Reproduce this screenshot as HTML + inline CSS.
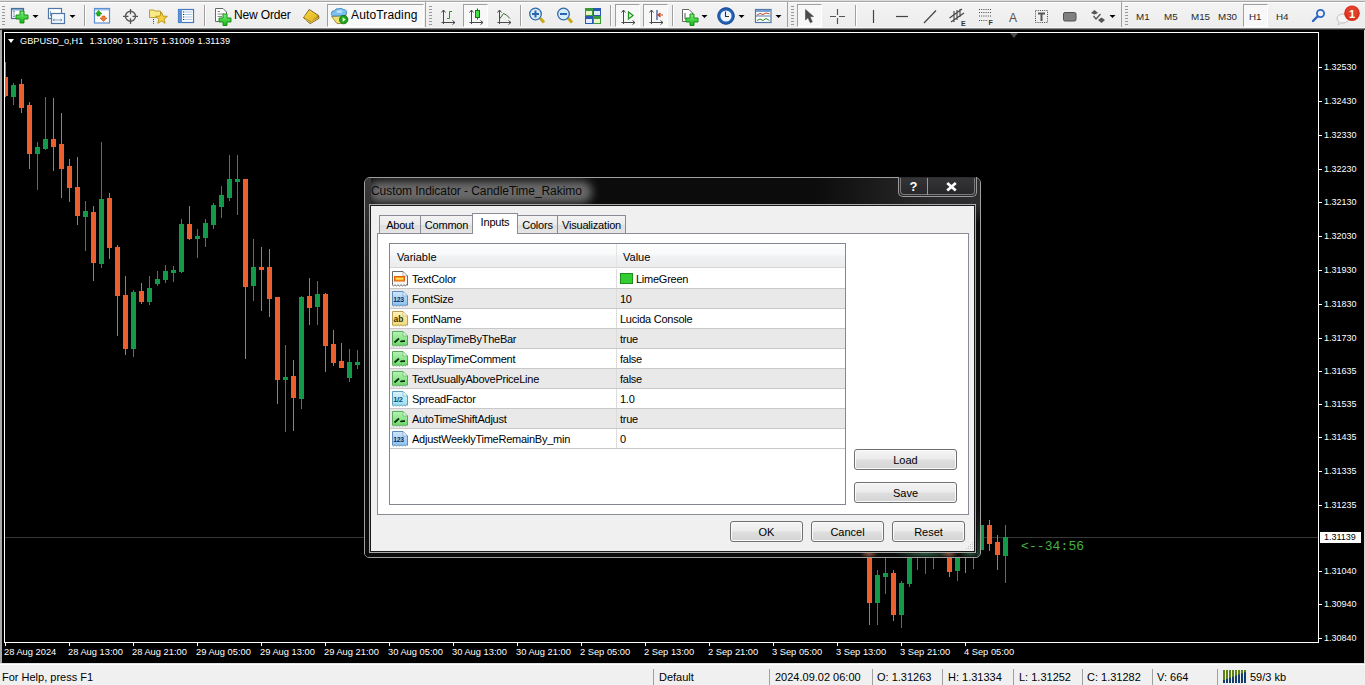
<!DOCTYPE html>
<html><head><meta charset="utf-8">
<style>
*{box-sizing:border-box;margin:0;padding:0}
html,body{width:1365px;height:685px;overflow:hidden;background:#f0f0f0;font-family:"Liberation Sans",sans-serif;position:relative}
.abs{position:absolute}
#tb{position:absolute;left:0;top:0;width:1365px;height:29px;background:linear-gradient(#f4f4f4,#ececec)}
#tb .l0{position:absolute;left:0;top:0;width:1365px;height:1px;background:#dcdcdc}
#tb .l1{position:absolute;left:0;top:1px;width:1365px;height:1px;background:#a8a8a8}
#tb .l2{position:absolute;left:0;top:2px;width:1365px;height:1px;background:#fff}
#tb .l3{position:absolute;left:0;top:28px;width:1365px;height:1px;background:#8c8c8c}
.sep{position:absolute;top:5px;width:1px;height:21px;background:#a0a0a0;box-shadow:1px 0 0 #fff}
.grip{position:absolute;top:6px;width:3px;height:20px;background:repeating-linear-gradient(#9a9a9a 0 1px,transparent 1px 3px)}
.pbtn{position:absolute;top:4px;height:23px;border:1px solid #a0a0a0;border-right-color:#fff;border-bottom-color:#fff;background:#f8f8f8}
.dd{position:absolute;top:15px;width:0;height:0;border-left:3px solid transparent;border-right:3px solid transparent;border-top:3px solid #000}
.tbt{position:absolute;font-size:12px;color:#000;top:8px;white-space:nowrap}
.tf{position:absolute;font-size:9.8px;color:#2a2a2a;top:11px;white-space:nowrap}
svg{position:absolute;overflow:visible}
#chart{position:absolute;left:0;top:29px;width:1365px;height:634px;background:#000;overflow:hidden}
#chart i{position:absolute;display:block}
#stripL{position:absolute;left:0;top:28px;width:2px;height:635px;background:#a8a8a8}
#stripR{position:absolute;left:1364px;top:29px;width:1px;height:634px;background:#d4d4d4}
.frame{position:absolute;left:4px;top:32px;width:1315px;height:611px;border:1px solid #fff}
.pt{position:absolute;left:1319px;width:3px;height:1px;background:#fff}
.pl{position:absolute;left:1324px;font-size:9px;color:#fff;white-space:nowrap;line-height:12px}
.tt{position:absolute;top:643px;width:1px;height:3px;background:#fff}
.tl{position:absolute;top:646px;font-size:9.3px;color:#fff;white-space:nowrap;line-height:12px}
#sb{position:absolute;left:0;top:663px;width:1365px;height:22px;background:#f0f0f0;border-top:1px solid #e2e2e2;box-shadow:inset 0 1px 0 #fff}
.ss{position:absolute;top:5px;width:1px;height:17px;background:#a0a0a0}
.st{position:absolute;top:6px;font-size:11px;color:#000;white-space:nowrap;line-height:14px}
/* dialog */
#dlg{position:absolute;left:364px;top:177px;width:617px;height:381px;border:1px solid #9c9c9c;border-radius:6px 6px 5px 5px;background:linear-gradient(90deg,#3c3c3c 0,#2a2a2a 40%,#101010 60%,#0c0c0c 100%)}
#dlg .glow{position:absolute;left:0;top:0;width:560px;height:28px;background:radial-gradient(ellipse 260px 16px at 120px 14px,rgba(120,120,120,.8),rgba(60,60,60,.3) 70%,rgba(0,0,0,0) 100%)}
#dlg .title{position:absolute;left:6px;top:6px;font-size:12px;color:#141414;white-space:nowrap;text-shadow:0 0 6px #8a8a8a,0 0 3px #9a9a9a}
#client{position:absolute;left:4px;top:26px;width:607px;height:349px;border:1px solid #b4b4b4;background:#f0f0f0}
#client .in{position:absolute;left:0;top:0;right:0;bottom:0;border:1px solid #1c1c1c;border-right:0;border-bottom:0}
.tab{position:absolute;top:215px;height:19px;border:1px solid #898c95;border-bottom:0;background:linear-gradient(#f3f3f3,#ebebeb 50%,#dedede 51%,#e6e6e6);font-size:11px;color:#000;padding-top:3px;text-align:center;white-space:nowrap;letter-spacing:-0.2px}
.tab.sel{top:213px;height:21px;background:#fff;z-index:2;padding-top:2px}
#panel{position:absolute;left:7px;top:55px;width:592px;height:283px;border:1px solid #898c95;background:#fff}
#list{position:absolute;left:11px;top:9px;width:458px;height:263px;border:1px solid #828790;background:#fff;overflow:hidden}
.hdr{position:absolute;left:0;top:0;width:456px;height:24px;background:linear-gradient(#fff,#f5f6f7 50%,#f0f1f2);border-bottom:1px solid #e0e0e0}
.hsep{position:absolute;left:226px;top:0;width:1px;height:24px;background:#e5e5e5}
.ht{position:absolute;top:6px;font-size:11.5px;color:#000;line-height:14px}
.row{position:absolute;left:0;width:456px;height:20px;border-bottom:1px solid #d6d6d6}
.row.g{background:#ebebeb}
.row .v{position:absolute;left:22px;top:3px;font-size:11.5px;color:#000;white-space:nowrap;line-height:14px;letter-spacing:-0.2px}
.row .c{position:absolute;left:229px;top:3px;font-size:11.5px;color:#000;white-space:nowrap;line-height:14px}
.row .cs{position:absolute;left:226px;top:0;width:1px;height:20px;background:#d6d6d6}
.row svg{left:2px;top:2px}
.btn{position:absolute;height:21px;border:1px solid #707070;border-radius:3px;background:linear-gradient(#f4f4f4 0,#ececec 45%,#dedede 55%,#d4d4d4 100%);font-size:11px;color:#000;text-align:center;line-height:20px;box-shadow:inset 0 0 0 1px #fbfbfb}
.tbtn{position:absolute;top:-1px;height:19px;border:1px solid #7a7a7a;border-top:0;background:linear-gradient(#1e1e1e,#0a0a0a);color:#fff;font-weight:bold;text-align:center;font-size:13px;line-height:17px}
.rt{position:absolute;font-size:11px;color:#000;white-space:nowrap;line-height:14px;letter-spacing:-0.25px}
.ht{position:absolute;font-size:11px;color:#000;white-space:nowrap;line-height:14px}
</style></head><body>
<div id="tb"><div class="l0"></div><div class="l1"></div><div class="l2"></div><div class="l3"></div>
<div class="grip" style="left:2px"></div>
<div class="sep" style="left:84px"></div>
<div class="sep" style="left:204px"></div>
<div class="pbtn" style="left:327px;width:97px"></div>
<div class="abs" style="left:425px;top:2px;width:1px;height:26px;background:#a0a0a0"></div>
<div class="grip" style="left:429px"></div>
<div class="pbtn" style="left:463px;width:25px"></div>
<div class="sep" style="left:520px"></div>
<div class="sep" style="left:610px"></div>
<div class="pbtn" style="left:615px;width:25px"></div>
<div class="pbtn" style="left:643px;width:25px"></div>
<div class="sep" style="left:672px"></div>
<div class="abs" style="left:787px;top:2px;width:1px;height:26px;background:#a0a0a0"></div>
<div class="grip" style="left:791px"></div>
<div class="pbtn" style="left:797px;width:25px"></div>
<div class="sep" style="left:855px"></div>
<div class="abs" style="left:1121px;top:2px;width:1px;height:26px;background:#a0a0a0"></div>
<div class="grip" style="left:1125px"></div>
<div class="pbtn" style="left:1243px;width:25px"></div>
<div class="tbt" style="left:234px;top:8px;letter-spacing:-0.15px">New Order</div>
<div class="tbt" style="left:351px;top:8px;letter-spacing:0.15px">AutoTrading</div>
<div class="tf" style="left:1136px">M1</div>
<div class="tf" style="left:1164px">M5</div>
<div class="tf" style="left:1191px">M15</div>
<div class="tf" style="left:1218px">M30</div>
<div class="tf" style="left:1249px">H1</div>
<div class="tf" style="left:1276px">H4</div>
<svg width="1365" height="28" style="left:0;top:0" viewBox="0 0 1365 28">
<defs>
<linearGradient id="gplus" x1="0" y1="0" x2="0" y2="1"><stop offset="0" stop-color="#7cf27c"/><stop offset="1" stop-color="#18b418"/></linearGradient>
<linearGradient id="gold" x1="0" y1="0" x2="1" y2="1"><stop offset="0" stop-color="#fff0a0"/><stop offset="1" stop-color="#c89a10"/></linearGradient><linearGradient id="gold2" x1="0" y1="0" x2="1" y2="1"><stop offset="0" stop-color="#f8d840"/><stop offset="1" stop-color="#e0b020"/></linearGradient>
</defs>
<!-- new chart -->
<rect x="11.5" y="8.5" width="12" height="10" fill="#fff" stroke="#4a6f96" stroke-width="1.2"/>
<rect x="12" y="9" width="11" height="1.5" fill="#7aa4d4"/>
<path d="M14,11 V17 M13,12 L14,11 L15,12 M13,16 L14,17 L15,16" stroke="#7a90a8" stroke-width="0.8" fill="none"/>
<path d="M20,11 H24 V15 H28 V19 H24 V23 H20 V19 H16 V15 H20 Z" fill="url(#gplus)" stroke="#0c8a0c" stroke-width="0.9"/>
<path d="M32.5,15 H38.5 L35.5,18 Z" fill="#000"/>
<!-- profiles -->
<rect x="48.5" y="8.5" width="13" height="10" fill="#fff" stroke="#4f78a8" stroke-width="1.2"/>
<path d="M50.5,11 V16 M50.5,15 H58 M56.5,14 L58,15 L56.5,16" stroke="#6a88b0" stroke-width="0.8" fill="none"/>
<rect x="51.5" y="13.5" width="13" height="10" fill="#f4f9ff" stroke="#4f78a8" stroke-width="1.2"/>
<path d="M53,20 H62 M54.5,19 L53,20 L54.5,21 M60.5,19 L62,20 L60.5,21" stroke="#6a88b0" stroke-width="0.8" fill="none"/>
<path d="M69.5,15 H75.5 L72.5,18 Z" fill="#000"/>
<!-- market watch -->
<rect x="94.5" y="8.5" width="15" height="14.5" fill="#fff" stroke="#5e8fd0" stroke-width="1.2"/>
<rect x="95" y="9" width="14" height="1.5" fill="#9cc0ec"/>
<path d="M98.5,10.5 L102,14 H100 V16 H97 V14 H95.5 Z" fill="#20b020" stroke="#138a13" stroke-width="0.6"/>
<path d="M103.5,21.5 L107,18 H105 V16 H102 V18 H100 Z" fill="#f07a30" stroke="#c85a18" stroke-width="0.6"/>
<!-- crosshair -->
<circle cx="130.5" cy="16.3" r="5" fill="none" stroke="#555" stroke-width="1.4"/>
<path d="M123,16.3 H128.5 M132.5,16.3 H138 M130.5,9 V14.3 M130.5,18.3 V24" stroke="#555" stroke-width="1.3"/>
<!-- folder star -->
<path d="M149.5,10 H154 L155,11 H160.5 V17.5 H149.5 Z" fill="#f8ea88" stroke="#b8a030" stroke-width="1"/>
<path d="M161.50,12.10 L163.09,16.12 L167.40,16.38 L164.07,19.13 L165.14,23.32 L161.50,21.00 L157.86,23.32 L158.93,19.13 L155.60,16.38 L159.91,16.12 Z" fill="#f2d040" stroke="#b89410" stroke-width="0.9"/>
<path d="M153.5,19 V24" stroke="#333" stroke-width="1" stroke-dasharray="1 1.2"/>
<!-- navigator -->
<rect x="178.5" y="9.5" width="15" height="13" fill="#fff" stroke="#4878c0" stroke-width="1.2"/>
<rect x="178.5" y="9.5" width="3.5" height="13" fill="#5a92d8"/>
<path d="M184,12 H192 M184,14.5 H192 M184,17 H192 M184,19.5 H192" stroke="#9bb8dc" stroke-width="0.8"/>
<path d="M183,12 h1 M183,14.5 h1 M183,17 h1 M183,19.5 h1" stroke="#222" stroke-width="1"/>
<!-- new order -->
<path d="M215.5,8.5 H223 L226.5,12 V21.5 H215.5 Z" fill="#fff" stroke="#666" stroke-width="1"/>
<path d="M217.5,11.5 H220 M217.5,14 H224 M217.5,16.5 H222" stroke="#888" stroke-width="1"/>
<path d="M223,14 H227 V18 H231 V22 H227 V25.5 H223 V22 H219 V18 H223 Z" fill="url(#gplus)" stroke="#0c8a0c" stroke-width="0.9"/>
<!-- gold book -->
<path d="M303.5,17.8 L309.2,9.5 L318.5,15.5 L319,18.3 L310.2,23.6 Z" fill="#b89020" stroke="#6a5010" stroke-width="0.9"/>
<path d="M304,17.3 L309.4,10 L317.8,15.6 L311.5,21.5 Z" fill="url(#gold2)"/>
<path d="M305,19 L310.5,22.6 L318.5,17.8" stroke="#e8c850" stroke-width="0.9" fill="none"/>
<!-- autotrading icon -->
<path d="M331.5,16.5 L346,15.5 L346,20 L341,23.5 L337,23.5 Z" fill="#f0e070" stroke="#8a7a20" stroke-width="0.8"/>
<path d="M331.5,13.5 Q331,10.5 334.5,10.8 Q335.5,8 339,8.8 Q341.5,7.5 343.5,9.5 Q347.5,10 346.5,13 Q347,15.5 343,15.8 L334,16 Q330.5,15.8 331.5,13.5 Z" fill="#7cc0ec" stroke="#3a80b8" stroke-width="0.8"/>
<ellipse cx="339.5" cy="11.5" rx="3" ry="1.6" fill="#b8e0fa"/>
<circle cx="343.7" cy="19.6" r="4.2" fill="#18a818" stroke="#0a6a0a" stroke-width="0.8"/>
<path d="M342.6,17.3 L345.8,19.6 L342.6,21.9 Z" fill="#e8ffe8"/>
<!-- bar chart -->
<path d="M443.5,10 V24 M441.5,22.5 H455" stroke="#4a4a4a" stroke-width="1" fill="none"/><path d="M441.5,12.5 L443.5,10 L445.5,12.5 M452.5,20.5 L455,22.5 L452.5,24.5" stroke="#4a4a4a" stroke-width="1" fill="none"/>
<path d="M447,18.5 H449.5 V11.5 H452" stroke="#1a9a1a" stroke-width="1" fill="none"/>
<!-- candle chart -->
<path d="M471.5,10 V24 M469.5,22.5 H483" stroke="#4a4a4a" stroke-width="1" fill="none"/><path d="M469.5,12.5 L471.5,10 L473.5,12.5 M480.5,20.5 L483,22.5 L480.5,24.5" stroke="#4a4a4a" stroke-width="1" fill="none"/>
<path d="M477.5,8.5 V19.5" stroke="#107a10" stroke-width="1"/>
<rect x="475.5" y="10.5" width="4" height="7" fill="#46e046" stroke="#107a10" stroke-width="1"/>
<!-- line chart -->
<path d="M499.5,10 V24 M497.5,22.5 H511" stroke="#4a4a4a" stroke-width="1" fill="none"/><path d="M497.5,12.5 L499.5,10 L501.5,12.5 M508.5,20.5 L511,22.5 L508.5,24.5" stroke="#4a4a4a" stroke-width="1" fill="none"/>
<path d="M499.5,19 L503.5,13.5 L506.5,15 L510,18.5" stroke="#3a6a3a" stroke-width="1" fill="none"/>
<!-- zoom in / out -->
<path d="M540,18 L544,22.5" stroke="#c8a818" stroke-width="3"/>
<circle cx="535.5" cy="14" r="5.8" fill="#d4ecfc" stroke="#3068a8" stroke-width="1.3"/>
<path d="M532,14 H539 M535.5,10.5 V17.5" stroke="#2a64b0" stroke-width="2"/>
<path d="M568,18 L572,22.5" stroke="#c8a818" stroke-width="3"/>
<circle cx="563.5" cy="14" r="5.8" fill="#d4ecfc" stroke="#3068a8" stroke-width="1.3"/>
<path d="M560,14 H567" stroke="#2a64b0" stroke-width="2"/>
<!-- tile -->
<rect x="585" y="8" width="8" height="8" fill="#3a9a3a"/><rect x="586" y="11" width="6" height="4" fill="#e8f4c8"/>
<rect x="593" y="8" width="8" height="8" fill="#2a58b8"/><rect x="594" y="11" width="6" height="4" fill="#e4ecfa"/>
<rect x="585" y="16" width="8" height="8" fill="#2a58b8"/><rect x="586" y="19" width="6" height="4" fill="#e4ecfa"/>
<rect x="593" y="16" width="8" height="8" fill="#3a9a3a"/><rect x="594" y="19" width="6" height="4" fill="#e8f4c8"/>
<!-- auto scroll -->
<path d="M623.5,10 V24 M621.5,22.5 H635" stroke="#4a4a4a" stroke-width="1" fill="none"/><path d="M621.5,12.5 L623.5,10 L625.5,12.5 M632.5,20.5 L635,22.5 L632.5,24.5" stroke="#4a4a4a" stroke-width="1" fill="none"/>
<path d="M628.5,12 L633,15.5 L628.5,19 Z" fill="none" stroke="#1a9a1a" stroke-width="1.3"/>
<!-- chart shift -->
<path d="M651.5,10 V24 M649.5,22.5 H663" stroke="#4a4a4a" stroke-width="1" fill="none"/><path d="M649.5,12.5 L651.5,10 L653.5,12.5 M660.5,20.5 L663,22.5 L660.5,24.5" stroke="#4a4a4a" stroke-width="1" fill="none"/>
<path d="M657,10 V20" stroke="#2a4a8a" stroke-width="1.2"/>
<path d="M663,15 H658.5 M660.5,13 L658,15 L660.5,17" stroke="#c04020" stroke-width="1.2" fill="none"/>
<!-- indicators -->
<path d="M682.5,9.5 H689 L692.5,13 V21.5 H682.5 Z" fill="#fff" stroke="#666" stroke-width="1"/>
<path d="M685,13 V19 H688" stroke="#555" stroke-width="1" fill="none"/>
<path d="M690,14 H694 V18 H698 V22 H694 V25.5 H690 V22 H686 V18 H690 Z" fill="url(#gplus)" stroke="#0c8a0c" stroke-width="0.9"/>
<path d="M701.5,15 H707.5 L704.5,18 Z" fill="#000"/>
<!-- clock -->
<circle cx="726" cy="16" r="7" fill="#eef6ff" stroke="#1f5fb8" stroke-width="2.8"/><circle cx="726" cy="16" r="8.3" fill="none" stroke="#14408a" stroke-width="0.8"/>
<path d="M725.5,11.5 V16.5 H729" stroke="#333" stroke-width="1.1" fill="none"/>
<path d="M738.5,15 H744.5 L741.5,18 Z" fill="#000"/>
<!-- templates -->
<rect x="755.5" y="9.5" width="15.5" height="13" fill="#fff" stroke="#5078a8" stroke-width="1.2"/>
<rect x="756" y="10" width="14.5" height="2" fill="#7aa0d0"/>
<path d="M756,16 H770.5" stroke="#5078a8" stroke-width="1"/>
<path d="M757,15 L760,13.5 L763,14.5 L766,13 L769.5,13.8" stroke="#c04a20" stroke-width="1" fill="none"/>
<path d="M757,20.5 L760,19 L763,20.5 L766,18.5 L769.5,20.5" stroke="#2a8a2a" stroke-width="1" fill="none"/>
<path d="M775.5,15 H781.5 L778.5,18 Z" fill="#000"/>
<!-- cursor -->
<path d="M805.5,9.5 L813.5,16.5 L810,16.8 L812.3,21.8 L810.3,22.8 L808,17.7 L805.5,20 Z" fill="#4a4a4a" stroke="#4a4a4a" stroke-width="0.6"/>
<!-- crosshair 2 -->
<path d="M830,16.5 H845 M837.5,9 V24" stroke="#555" stroke-width="1.2"/>
<rect x="836" y="15" width="3" height="3" fill="#f0f0f0"/>
<!-- lines -->
<path d="M873.5,10 V23" stroke="#444" stroke-width="1.2"/>
<path d="M896,16.5 H908" stroke="#444" stroke-width="1.2"/>
<path d="M924,23 L936,10.5" stroke="#444" stroke-width="1.2"/>
<!-- channel E -->
<path d="M949.5,18 L962,9 M951,22 L964,13 M954,11 V22 M957,10 V20 M960,9 V17" stroke="#444" stroke-width="1.1" fill="none"/>
<text x="961" y="25.5" font-family="Liberation Sans" font-weight="bold" font-size="7" fill="#333">E</text>
<!-- fibo F -->
<path d="M979,9.5 H992 M979,12.5 H992 M979,16 H992 M979,20.5 H988" stroke="#444" stroke-width="1" stroke-dasharray="1 1.2"/>
<text x="988.5" y="25" font-family="Liberation Sans" font-weight="bold" font-size="7" fill="#333">F</text>
<!-- A -->
<text x="1009" y="21.5" font-family="Liberation Sans" font-size="12" fill="#505050">A</text>
<!-- T label -->
<rect x="1035.5" y="10.5" width="12" height="12" fill="none" stroke="#444" stroke-width="1" stroke-dasharray="1 1.2"/>
<path d="M1038,13.5 H1045 M1041.5,13.5 V21" stroke="#555" stroke-width="2"/>
<!-- rectangle -->
<rect x="1063.5" y="12.5" width="12.5" height="8.5" rx="1.5" fill="#808080" stroke="#505050" stroke-width="1"/>
<!-- arrows -->
<path d="M1091,13 L1094.5,10 L1098,13 L1094.5,14.5 Z" fill="#555"/>
<path d="M1093.5,16 L1096,19 L1100.5,14" stroke="#555" stroke-width="1.3" fill="none"/>
<path d="M1098,20 L1101.5,17.5 L1105,20 L1101.5,23 Z" fill="#555"/>
<path d="M1109.5,15 H1115.5 L1112.5,18 Z" fill="#000"/>
<!-- search -->
<circle cx="1320.5" cy="13.5" r="3.6" fill="none" stroke="#2a64c8" stroke-width="1.8"/>
<path d="M1317.5,16.5 L1313,21" stroke="#2a64c8" stroke-width="2.4" stroke-linecap="round"/>
<!-- chat -->
<ellipse cx="1343" cy="18.5" rx="6" ry="4.5" fill="#f4f4f4" stroke="#c0c0c0" stroke-width="1"/>
<path d="M1339,22 L1338,25 L1342,22.5" fill="#f4f4f4" stroke="#c0c0c0" stroke-width="0.8"/>
<circle cx="1352" cy="13.2" r="7.8" fill="#d8301c"/>
<circle cx="1352" cy="12" r="6" fill="#e84a30" opacity=".6"/>
<text x="1352" y="17.5" text-anchor="middle" font-family="Liberation Sans" font-weight="bold" font-size="11" fill="#fff">1</text>
</svg>

</div>
<div id="chart"><div style="position:absolute;left:5px;top:4px;width:1313px;height:609px;overflow:hidden"><div style="position:absolute;left:-5px;top:-33px;width:1365px;height:685px">
<i style="left:5px;top:537px;width:1314px;height:1px;background:#363636"></i>
<i style="left:5px;top:62px;height:35px;width:1px;background:#ec6030"></i>
<i style="left:3px;top:77px;height:19px;width:5px;background:#ec6030"></i>
<i style="left:13px;top:83px;height:22px;width:1px;background:#13994a"></i>
<i style="left:11px;top:85px;height:12px;width:5px;background:#13994a"></i>
<i style="left:21px;top:79px;height:34px;width:1px;background:#ec6030"></i>
<i style="left:19px;top:84px;height:24px;width:5px;background:#ec6030"></i>
<i style="left:29px;top:102px;height:67px;width:1px;background:#ec6030"></i>
<i style="left:27px;top:105px;height:49px;width:5px;background:#ec6030"></i>
<i style="left:37px;top:142px;height:48px;width:1px;background:#13994a"></i>
<i style="left:35px;top:147px;height:7px;width:5px;background:#13994a"></i>
<i style="left:45px;top:97px;height:53px;width:1px;background:#13994a"></i>
<i style="left:43px;top:139px;height:10px;width:5px;background:#13994a"></i>
<i style="left:53px;top:98px;height:73px;width:1px;background:#ec6030"></i>
<i style="left:51px;top:139px;height:8px;width:5px;background:#ec6030"></i>
<i style="left:61px;top:113px;height:85px;width:1px;background:#ec6030"></i>
<i style="left:59px;top:144px;height:25px;width:5px;background:#ec6030"></i>
<i style="left:69px;top:159px;height:43px;width:1px;background:#ec6030"></i>
<i style="left:67px;top:166px;height:22px;width:5px;background:#ec6030"></i>
<i style="left:77px;top:157px;height:68px;width:1px;background:#ec6030"></i>
<i style="left:75px;top:187px;height:29px;width:5px;background:#ec6030"></i>
<i style="left:85px;top:201px;height:50px;width:1px;background:#13994a"></i>
<i style="left:83px;top:211px;height:6px;width:5px;background:#13994a"></i>
<i style="left:93px;top:206px;height:75px;width:1px;background:#ec6030"></i>
<i style="left:91px;top:212px;height:51px;width:5px;background:#ec6030"></i>
<i style="left:101px;top:142px;height:126px;width:1px;background:#13994a"></i>
<i style="left:99px;top:199px;height:65px;width:5px;background:#13994a"></i>
<i style="left:109px;top:193px;height:66px;width:1px;background:#ec6030"></i>
<i style="left:107px;top:198px;height:50px;width:5px;background:#ec6030"></i>
<i style="left:117px;top:245px;height:91px;width:1px;background:#ec6030"></i>
<i style="left:115px;top:247px;height:49px;width:5px;background:#ec6030"></i>
<i style="left:125px;top:276px;height:79px;width:1px;background:#ec6030"></i>
<i style="left:123px;top:295px;height:54px;width:5px;background:#ec6030"></i>
<i style="left:133px;top:290px;height:67px;width:1px;background:#13994a"></i>
<i style="left:131px;top:292px;height:57px;width:5px;background:#13994a"></i>
<i style="left:141px;top:283px;height:21px;width:1px;background:#ec6030"></i>
<i style="left:139px;top:291px;height:11px;width:5px;background:#ec6030"></i>
<i style="left:149px;top:276px;height:29px;width:1px;background:#13994a"></i>
<i style="left:147px;top:288px;height:14px;width:5px;background:#13994a"></i>
<i style="left:157px;top:271px;height:15px;width:1px;background:#13994a"></i>
<i style="left:155px;top:279px;height:5px;width:5px;background:#13994a"></i>
<i style="left:165px;top:265px;height:18px;width:1px;background:#13994a"></i>
<i style="left:163px;top:271px;height:9px;width:5px;background:#13994a"></i>
<i style="left:173px;top:266px;height:16px;width:1px;background:#13994a"></i>
<i style="left:171px;top:270px;height:3px;width:5px;background:#13994a"></i>
<i style="left:181px;top:219px;height:54px;width:1px;background:#13994a"></i>
<i style="left:179px;top:224px;height:48px;width:5px;background:#13994a"></i>
<i style="left:189px;top:206px;height:34px;width:1px;background:#ec6030"></i>
<i style="left:187px;top:224px;height:15px;width:5px;background:#ec6030"></i>
<i style="left:197px;top:229px;height:29px;width:1px;background:#13994a"></i>
<i style="left:195px;top:236px;height:3px;width:5px;background:#13994a"></i>
<i style="left:205px;top:219px;height:28px;width:1px;background:#13994a"></i>
<i style="left:203px;top:223px;height:15px;width:5px;background:#13994a"></i>
<i style="left:213px;top:203px;height:26px;width:1px;background:#13994a"></i>
<i style="left:211px;top:205px;height:20px;width:5px;background:#13994a"></i>
<i style="left:221px;top:186px;height:32px;width:1px;background:#13994a"></i>
<i style="left:219px;top:195px;height:12px;width:5px;background:#13994a"></i>
<i style="left:229px;top:155px;height:46px;width:1px;background:#13994a"></i>
<i style="left:227px;top:179px;height:19px;width:5px;background:#13994a"></i>
<i style="left:237px;top:155px;height:60px;width:1px;background:#13994a"></i>
<i style="left:235px;top:179px;height:3px;width:5px;background:#13994a"></i>
<i style="left:245px;top:179px;height:180px;width:1px;background:#ec6030"></i>
<i style="left:243px;top:179px;height:108px;width:5px;background:#ec6030"></i>
<i style="left:253px;top:239px;height:62px;width:1px;background:#13994a"></i>
<i style="left:251px;top:267px;height:19px;width:5px;background:#13994a"></i>
<i style="left:261px;top:247px;height:64px;width:1px;background:#ec6030"></i>
<i style="left:259px;top:267px;height:3px;width:5px;background:#ec6030"></i>
<i style="left:269px;top:249px;height:68px;width:1px;background:#ec6030"></i>
<i style="left:267px;top:267px;height:32px;width:5px;background:#ec6030"></i>
<i style="left:277px;top:297px;height:107px;width:1px;background:#ec6030"></i>
<i style="left:275px;top:297px;height:83px;width:5px;background:#ec6030"></i>
<i style="left:285px;top:345px;height:87px;width:1px;background:#13994a"></i>
<i style="left:283px;top:377px;height:3px;width:5px;background:#13994a"></i>
<i style="left:293px;top:360px;height:71px;width:1px;background:#ec6030"></i>
<i style="left:291px;top:376px;height:22px;width:5px;background:#ec6030"></i>
<i style="left:301px;top:296px;height:113px;width:1px;background:#13994a"></i>
<i style="left:299px;top:297px;height:102px;width:5px;background:#13994a"></i>
<i style="left:309px;top:278px;height:47px;width:1px;background:#ec6030"></i>
<i style="left:307px;top:296px;height:12px;width:5px;background:#ec6030"></i>
<i style="left:317px;top:281px;height:44px;width:1px;background:#13994a"></i>
<i style="left:315px;top:294px;height:13px;width:5px;background:#13994a"></i>
<i style="left:325px;top:293px;height:79px;width:1px;background:#ec6030"></i>
<i style="left:323px;top:294px;height:52px;width:5px;background:#ec6030"></i>
<i style="left:333px;top:330px;height:36px;width:1px;background:#ec6030"></i>
<i style="left:331px;top:344px;height:19px;width:5px;background:#ec6030"></i>
<i style="left:341px;top:343px;height:25px;width:1px;background:#ec6030"></i>
<i style="left:339px;top:361px;height:7px;width:5px;background:#ec6030"></i>
<i style="left:349px;top:349px;height:33px;width:1px;background:#13994a"></i>
<i style="left:347px;top:362px;height:16px;width:5px;background:#13994a"></i>
<i style="left:357px;top:350px;height:19px;width:1px;background:#13994a"></i>
<i style="left:355px;top:362px;height:3px;width:5px;background:#13994a"></i>
<i style="left:869px;top:540px;height:85px;width:1px;background:#ec6030"></i>
<i style="left:867px;top:545px;height:58px;width:5px;background:#ec6030"></i>
<i style="left:877px;top:570px;height:55px;width:1px;background:#13994a"></i>
<i style="left:875px;top:575px;height:28px;width:5px;background:#13994a"></i>
<i style="left:885px;top:540px;height:54px;width:1px;background:#13994a"></i>
<i style="left:883px;top:573px;height:4px;width:5px;background:#13994a"></i>
<i style="left:893px;top:570px;height:51px;width:1px;background:#ec6030"></i>
<i style="left:891px;top:573px;height:42px;width:5px;background:#ec6030"></i>
<i style="left:901px;top:581px;height:47px;width:1px;background:#13994a"></i>
<i style="left:899px;top:583px;height:32px;width:5px;background:#13994a"></i>
<i style="left:909px;top:540px;height:47px;width:1px;background:#13994a"></i>
<i style="left:907px;top:545px;height:39px;width:5px;background:#13994a"></i>
<i style="left:917px;top:540px;height:30px;width:1px;background:#13994a"></i>
<i style="left:915px;top:545px;height:6px;width:5px;background:#13994a"></i>
<i style="left:925px;top:540px;height:34px;width:1px;background:#13994a"></i>
<i style="left:923px;top:545px;height:6px;width:5px;background:#13994a"></i>
<i style="left:933px;top:540px;height:29px;width:1px;background:#13994a"></i>
<i style="left:931px;top:545px;height:6px;width:5px;background:#13994a"></i>
<i style="left:949px;top:540px;height:37px;width:1px;background:#ec6030"></i>
<i style="left:947px;top:545px;height:27px;width:5px;background:#ec6030"></i>
<i style="left:957px;top:540px;height:41px;width:1px;background:#13994a"></i>
<i style="left:955px;top:545px;height:26px;width:5px;background:#13994a"></i>
<i style="left:965px;top:540px;height:33px;width:1px;background:#ec6030"></i>
<i style="left:963px;top:545px;height:6px;width:5px;background:#ec6030"></i>
<i style="left:973px;top:540px;height:29px;width:1px;background:#13994a"></i>
<i style="left:971px;top:545px;height:6px;width:5px;background:#13994a"></i>
<i style="left:981px;top:525px;height:25px;width:1px;background:#13994a"></i>
<i style="left:979px;top:525px;height:25px;width:5px;background:#13994a"></i>
<i style="left:989px;top:520px;height:31px;width:1px;background:#ec6030"></i>
<i style="left:987px;top:525px;height:19px;width:5px;background:#ec6030"></i>
<i style="left:997px;top:535px;height:35px;width:1px;background:#ec6030"></i>
<i style="left:995px;top:542px;height:13px;width:5px;background:#ec6030"></i>
<i style="left:1005px;top:525px;height:58px;width:1px;background:#13994a"></i>
<i style="left:1003px;top:537px;height:19px;width:5px;background:#13994a"></i>
</div></div></div>
<div id="stripL"></div><div id="stripR"></div><div class="abs" style="left:0;top:29px;width:1365px;height:1px;background:#383838"></div><div class="abs" style="left:0;top:27px;width:1365px;height:1px;background:#f6f6f6"></div>
<div class="frame"></div>
<div class="abs" style="left:1010px;top:33px;width:0;height:0;border-left:4.5px solid transparent;border-right:4.5px solid transparent;border-top:5px solid #484848"></div>
<div class="pt" style="top:67px"></div><div class="pl" style="top:61px">1.32530</div>
<div class="pt" style="top:101px"></div><div class="pl" style="top:95px">1.32430</div>
<div class="pt" style="top:135px"></div><div class="pl" style="top:129px">1.32330</div>
<div class="pt" style="top:169px"></div><div class="pl" style="top:163px">1.32230</div>
<div class="pt" style="top:202px"></div><div class="pl" style="top:196px">1.32130</div>
<div class="pt" style="top:236px"></div><div class="pl" style="top:230px">1.32030</div>
<div class="pt" style="top:270px"></div><div class="pl" style="top:264px">1.31930</div>
<div class="pt" style="top:304px"></div><div class="pl" style="top:298px">1.31830</div>
<div class="pt" style="top:338px"></div><div class="pl" style="top:332px">1.31730</div>
<div class="pt" style="top:371px"></div><div class="pl" style="top:365px">1.31635</div>
<div class="pt" style="top:404px"></div><div class="pl" style="top:398px">1.31535</div>
<div class="pt" style="top:437px"></div><div class="pl" style="top:431px">1.31435</div>
<div class="pt" style="top:471px"></div><div class="pl" style="top:465px">1.31335</div>
<div class="pt" style="top:505px"></div><div class="pl" style="top:499px">1.31235</div>
<div class="pt" style="top:571px"></div><div class="pl" style="top:565px">1.31040</div>
<div class="pt" style="top:604px"></div><div class="pl" style="top:598px">1.30940</div>
<div class="pt" style="top:638px"></div><div class="pl" style="top:632px">1.30840</div>
<div class="abs" style="left:1320px;top:532px;width:41px;height:11px;background:#fff"></div>
<div class="pl" style="top:531px;color:#000">1.31139</div>
<div class="tt" style="left:5px"></div><div class="tl" style="left:4px">28 Aug 2024</div>
<div class="tt" style="left:69px"></div><div class="tl" style="left:68px">28 Aug 13:00</div>
<div class="tt" style="left:133px"></div><div class="tl" style="left:132px">28 Aug 21:00</div>
<div class="tt" style="left:197px"></div><div class="tl" style="left:196px">29 Aug 05:00</div>
<div class="tt" style="left:261px"></div><div class="tl" style="left:260px">29 Aug 13:00</div>
<div class="tt" style="left:325px"></div><div class="tl" style="left:324px">29 Aug 21:00</div>
<div class="tt" style="left:389px"></div><div class="tl" style="left:388px">30 Aug 05:00</div>
<div class="tt" style="left:453px"></div><div class="tl" style="left:452px">30 Aug 13:00</div>
<div class="tt" style="left:517px"></div><div class="tl" style="left:516px">30 Aug 21:00</div>
<div class="tt" style="left:581px"></div><div class="tl" style="left:580px">2 Sep 05:00</div>
<div class="tt" style="left:645px"></div><div class="tl" style="left:644px">2 Sep 13:00</div>
<div class="tt" style="left:709px"></div><div class="tl" style="left:708px">2 Sep 21:00</div>
<div class="tt" style="left:773px"></div><div class="tl" style="left:772px">3 Sep 05:00</div>
<div class="tt" style="left:837px"></div><div class="tl" style="left:836px">3 Sep 13:00</div>
<div class="tt" style="left:901px"></div><div class="tl" style="left:900px">3 Sep 21:00</div>
<div class="tt" style="left:965px"></div><div class="tl" style="left:964px">4 Sep 05:00</div>
<div class="abs" style="left:8px;top:39px;width:0;height:0;border-left:3.5px solid transparent;border-right:3.5px solid transparent;border-top:4.5px solid #fff"></div>
<div class="abs" style="left:20px;top:35px;font-size:9.2px;color:#fff;white-space:nowrap;line-height:12px;word-spacing:0.5px">GBPUSD_o,H1&nbsp; 1.31090 1.31175 1.31009 1.31139</div>
<div class="abs" style="left:1021px;top:539px;font-family:'Liberation Mono',monospace;font-size:13px;letter-spacing:0.1px;color:#44b444;white-space:nowrap;line-height:15px">&lt;--34:56</div>
<div id="dlgw" style="position:absolute;left:0;top:0">
<div class="abs" style="left:364px;top:177px;width:617px;height:381px;border:1px solid #a0a0a0;border-radius:6px 6px 5px 5px;background:#0c0c0c;overflow:hidden">
<div class="abs" style="left:3px;top:3px;width:224px;height:22px;background:#6a6a6a;border-radius:10px;filter:blur(4px)"></div>
<div class="abs" style="left:0;top:0;width:6px;height:379px;background:linear-gradient(#3a3a3a,#1a1a1a 30%,#0c0c0c 60%)"></div>
<div class="abs" style="left:450px;top:0;width:170px;height:26px;background:linear-gradient(90deg,rgba(46,46,48,0),rgba(46,46,48,.9) 70%,#2e2e30)"></div><div class="abs" style="left:606px;top:26px;width:12px;height:20px;background:linear-gradient(#2e2e30,rgba(46,46,48,0))"></div>
<div class="abs" style="left:492px;top:373px;width:24px;height:6px;background:radial-gradient(ellipse 9px 4px at 12px 3px,rgba(220,120,90,.6),rgba(0,0,0,0))"></div><div class="abs" style="left:530px;top:373px;width:60px;height:6px;background:radial-gradient(ellipse 30px 4px at 30px 3px,rgba(60,150,100,.5),rgba(0,0,0,0))"></div><div class="abs" style="left:572px;top:373px;width:24px;height:6px;background:radial-gradient(ellipse 9px 4px at 12px 3px,rgba(220,120,90,.55),rgba(0,0,0,0))"></div><div class="abs" style="left:594px;top:373px;width:22px;height:6px;background:radial-gradient(ellipse 11px 4px at 11px 3px,rgba(60,150,100,.45),rgba(0,0,0,0))"></div>


<div class="abs" style="left:612px;top:330px;width:4px;height:50px;background:linear-gradient(rgba(40,110,70,0),rgba(40,110,70,.5))"></div>
</div>
<div class="abs" style="left:371px;top:184px;font-size:12px;color:#0a0a0a;white-space:nowrap;line-height:15px;letter-spacing:-0.06px">Custom Indicator - CandleTime_Rakimo</div>
<div class="abs" style="left:898px;top:177px;width:79px;height:20px;border:1px solid #9a9a9a;border-top:0;border-radius:0 0 5px 5px;background:#2c2c2e"></div>
<div class="abs" style="left:900px;top:178px;width:75px;height:17px;border:1px solid #7a7a7a;border-top:0;border-radius:0 0 4px 4px;background:linear-gradient(#343436,#28282a)"></div>
<div class="abs" style="left:927px;top:178px;width:1px;height:17px;background:#9a9a9a"></div>
<div class="abs" style="left:900px;top:179px;width:27px;font-size:13px;font-weight:bold;color:#fff;text-align:center;line-height:16px">?</div>
<div class="abs" style="left:928px;top:178px;width:47px;height:17px"><svg width="47" height="17" style="left:0;top:0"><path d="M19.2,5 L27.8,12.5 M27.8,5 L19.2,12.5" stroke="#fff" stroke-width="2.8" stroke-linecap="butt"/></svg></div>
<!-- client -->
<div class="abs" style="left:369px;top:204px;width:607px;height:349px;border:1px solid #a8a8a8;background:#f0f0f0;box-shadow:inset 0 0 0 1px #1a1a1a"></div>
<!-- tabs -->
<div class="tab" style="left:379px;width:42px">About</div>
<div class="tab" style="left:420px;width:53px">Common</div>
<div class="tab sel" style="left:472px;width:46px">Inputs</div>
<div class="tab" style="left:517px;width:41px">Colors</div>
<div class="tab" style="left:557px;width:69px">Visualization</div>
<!-- panel -->
<div class="abs" style="left:377px;top:233px;width:592px;height:282px;border:1px solid #898c95;background:#fff"></div>
<div class="abs" style="left:473px;top:233px;width:44px;height:2px;background:#fff;z-index:3"></div>
<!-- list -->
<div class="abs" style="left:389px;top:243px;width:457px;height:262px;border:1px solid #828790;background:#fff"></div>
<div class="abs" style="left:390px;top:244px;width:455px;height:23px;background:linear-gradient(#ffffff,#f7f8f9 45%,#f0f1f2 55%,#ebecee)"></div>
<div class="abs" style="left:390px;top:267px;width:455px;height:1px;background:#d5d5d5"></div>
<div class="abs" style="left:616px;top:244px;width:1px;height:23px;background:#e3e4e6"></div>
<div class="ht" style="left:397px;top:250px">Variable</div>
<div class="ht" style="left:623px;top:250px">Value</div>
<div class="abs" style="left:390px;top:269px;width:455px;height:19px;background:#ffffff"></div>
<div class="abs" style="left:390px;top:288px;width:455px;height:1px;background:#c8c8c8"></div>
<div class="abs" style="left:616px;top:269px;width:1px;height:19px;background:#dcdcdc"></div>
<svg width="16" height="16" style="left:392px;top:271px"><defs><linearGradient id="ig_color271" x1="0" y1="0" x2="0" y2="1"><stop offset="0" stop-color="#ffffff"/><stop offset="1" stop-color="#f4f4f4"/></linearGradient></defs><path d="M0.5,0.5 H11 L15.5,5 V14.2 L14.5,13.5 L13.5,15 L12,13.8 L10.5,15 L9,13.8 L7.5,15 L6,13.8 L4.5,15 L3,13.8 L1.5,15 L0.5,14.2 Z" fill="url(#ig_color271)" stroke="#6a6a6a" stroke-width="1"/><path d="M11,0.5 V5 H15.5" fill="none" stroke="#6a6a6a" stroke-width="0.8" opacity=".7"/><path d="M11.5,1 L15,4.5 H11.5 Z" fill="#ffffff" opacity=".6"/><rect x="2.5" y="5.5" width="10" height="4.5" fill="#f59a1a" stroke="#e0600c" stroke-width="1"/><rect x="4" y="7" width="7" height="1.6" fill="#ffe060"/></svg>
<div class="rt" style="left:412px;top:272px">TextColor</div>
<div class="abs" style="left:620px;top:273px;width:13px;height:11px;background:#32cd32;border:1px solid #1f8f1f"></div>
<div class="rt" style="left:636px;top:272px">LimeGreen</div>
<div class="abs" style="left:390px;top:289px;width:455px;height:19px;background:#e9e9e9"></div>
<div class="abs" style="left:390px;top:308px;width:455px;height:1px;background:#c8c8c8"></div>
<div class="abs" style="left:616px;top:289px;width:1px;height:19px;background:#dcdcdc"></div>
<svg width="16" height="16" style="left:392px;top:291px"><defs><linearGradient id="ig_123291" x1="0" y1="0" x2="0" y2="1"><stop offset="0" stop-color="#cfe6fb"/><stop offset="1" stop-color="#8cc0ee"/></linearGradient></defs><path d="M0.5,0.5 H11 L15.5,5 V14.2 L14.5,13.5 L13.5,15 L12,13.8 L10.5,15 L9,13.8 L7.5,15 L6,13.8 L4.5,15 L3,13.8 L1.5,15 L0.5,14.2 Z" fill="url(#ig_123291)" stroke="#5a8cc0" stroke-width="1"/><path d="M11,0.5 V5 H15.5" fill="none" stroke="#5a8cc0" stroke-width="0.8" opacity=".7"/><path d="M11.5,1 L15,4.5 H11.5 Z" fill="#ffffff" opacity=".6"/><text x="1.2" y="10.8" font-family="Liberation Sans" font-weight="bold" font-size="6.8" fill="#0a2a60" letter-spacing="-0.3">123</text></svg>
<div class="rt" style="left:412px;top:292px">FontSize</div>
<div class="rt" style="left:620px;top:292px">10</div>
<div class="abs" style="left:390px;top:309px;width:455px;height:19px;background:#ffffff"></div>
<div class="abs" style="left:390px;top:328px;width:455px;height:1px;background:#c8c8c8"></div>
<div class="abs" style="left:616px;top:309px;width:1px;height:19px;background:#dcdcdc"></div>
<svg width="16" height="16" style="left:392px;top:311px"><defs><linearGradient id="ig_ab311" x1="0" y1="0" x2="0" y2="1"><stop offset="0" stop-color="#fff4b8"/><stop offset="1" stop-color="#f0d878"/></linearGradient></defs><path d="M0.5,0.5 H11 L15.5,5 V14.2 L14.5,13.5 L13.5,15 L12,13.8 L10.5,15 L9,13.8 L7.5,15 L6,13.8 L4.5,15 L3,13.8 L1.5,15 L0.5,14.2 Z" fill="url(#ig_ab311)" stroke="#b8a050" stroke-width="1"/><path d="M11,0.5 V5 H15.5" fill="none" stroke="#b8a050" stroke-width="0.8" opacity=".7"/><path d="M11.5,1 L15,4.5 H11.5 Z" fill="#ffffff" opacity=".6"/><text x="1.5" y="11" font-family="Liberation Sans" font-weight="bold" font-size="8.5" fill="#3a3000">ab</text></svg>
<div class="rt" style="left:412px;top:312px">FontName</div>
<div class="rt" style="left:620px;top:312px">Lucida Console</div>
<div class="abs" style="left:390px;top:329px;width:455px;height:19px;background:#e9e9e9"></div>
<div class="abs" style="left:390px;top:348px;width:455px;height:1px;background:#c8c8c8"></div>
<div class="abs" style="left:616px;top:329px;width:1px;height:19px;background:#dcdcdc"></div>
<svg width="16" height="16" style="left:392px;top:331px"><defs><linearGradient id="ig_bool331" x1="0" y1="0" x2="0" y2="1"><stop offset="0" stop-color="#b4f2b4"/><stop offset="1" stop-color="#6cd86c"/></linearGradient></defs><path d="M0.5,0.5 H11 L15.5,5 V14.2 L14.5,13.5 L13.5,15 L12,13.8 L10.5,15 L9,13.8 L7.5,15 L6,13.8 L4.5,15 L3,13.8 L1.5,15 L0.5,14.2 Z" fill="url(#ig_bool331)" stroke="#58a858" stroke-width="1"/><path d="M11,0.5 V5 H15.5" fill="none" stroke="#58a858" stroke-width="0.8" opacity=".7"/><path d="M11.5,1 L15,4.5 H11.5 Z" fill="#ffffff" opacity=".6"/><path d="M2.5,11.5 L7,7.5 M8.5,9.8 Q9.5,10.8 10.5,10.2 L13,10.2" stroke="#0a300a" stroke-width="1.7" fill="none"/></svg>
<div class="rt" style="left:412px;top:332px">DisplayTimeByTheBar</div>
<div class="rt" style="left:620px;top:332px">true</div>
<div class="abs" style="left:390px;top:349px;width:455px;height:19px;background:#ffffff"></div>
<div class="abs" style="left:390px;top:368px;width:455px;height:1px;background:#c8c8c8"></div>
<div class="abs" style="left:616px;top:349px;width:1px;height:19px;background:#dcdcdc"></div>
<svg width="16" height="16" style="left:392px;top:351px"><defs><linearGradient id="ig_bool351" x1="0" y1="0" x2="0" y2="1"><stop offset="0" stop-color="#b4f2b4"/><stop offset="1" stop-color="#6cd86c"/></linearGradient></defs><path d="M0.5,0.5 H11 L15.5,5 V14.2 L14.5,13.5 L13.5,15 L12,13.8 L10.5,15 L9,13.8 L7.5,15 L6,13.8 L4.5,15 L3,13.8 L1.5,15 L0.5,14.2 Z" fill="url(#ig_bool351)" stroke="#58a858" stroke-width="1"/><path d="M11,0.5 V5 H15.5" fill="none" stroke="#58a858" stroke-width="0.8" opacity=".7"/><path d="M11.5,1 L15,4.5 H11.5 Z" fill="#ffffff" opacity=".6"/><path d="M2.5,11.5 L7,7.5 M8.5,9.8 Q9.5,10.8 10.5,10.2 L13,10.2" stroke="#0a300a" stroke-width="1.7" fill="none"/></svg>
<div class="rt" style="left:412px;top:352px">DisplayTimeComment</div>
<div class="rt" style="left:620px;top:352px">false</div>
<div class="abs" style="left:390px;top:369px;width:455px;height:19px;background:#e9e9e9"></div>
<div class="abs" style="left:390px;top:388px;width:455px;height:1px;background:#c8c8c8"></div>
<div class="abs" style="left:616px;top:369px;width:1px;height:19px;background:#dcdcdc"></div>
<svg width="16" height="16" style="left:392px;top:371px"><defs><linearGradient id="ig_bool371" x1="0" y1="0" x2="0" y2="1"><stop offset="0" stop-color="#b4f2b4"/><stop offset="1" stop-color="#6cd86c"/></linearGradient></defs><path d="M0.5,0.5 H11 L15.5,5 V14.2 L14.5,13.5 L13.5,15 L12,13.8 L10.5,15 L9,13.8 L7.5,15 L6,13.8 L4.5,15 L3,13.8 L1.5,15 L0.5,14.2 Z" fill="url(#ig_bool371)" stroke="#58a858" stroke-width="1"/><path d="M11,0.5 V5 H15.5" fill="none" stroke="#58a858" stroke-width="0.8" opacity=".7"/><path d="M11.5,1 L15,4.5 H11.5 Z" fill="#ffffff" opacity=".6"/><path d="M2.5,11.5 L7,7.5 M8.5,9.8 Q9.5,10.8 10.5,10.2 L13,10.2" stroke="#0a300a" stroke-width="1.7" fill="none"/></svg>
<div class="rt" style="left:412px;top:372px">TextUsuallyAbovePriceLine</div>
<div class="rt" style="left:620px;top:372px">false</div>
<div class="abs" style="left:390px;top:389px;width:455px;height:19px;background:#ffffff"></div>
<div class="abs" style="left:390px;top:408px;width:455px;height:1px;background:#c8c8c8"></div>
<div class="abs" style="left:616px;top:389px;width:1px;height:19px;background:#dcdcdc"></div>
<svg width="16" height="16" style="left:392px;top:391px"><defs><linearGradient id="ig_half391" x1="0" y1="0" x2="0" y2="1"><stop offset="0" stop-color="#d8f4fc"/><stop offset="1" stop-color="#9cdcf0"/></linearGradient></defs><path d="M0.5,0.5 H11 L15.5,5 V14.2 L14.5,13.5 L13.5,15 L12,13.8 L10.5,15 L9,13.8 L7.5,15 L6,13.8 L4.5,15 L3,13.8 L1.5,15 L0.5,14.2 Z" fill="url(#ig_half391)" stroke="#5aa0bc" stroke-width="1"/><path d="M11,0.5 V5 H15.5" fill="none" stroke="#5aa0bc" stroke-width="0.8" opacity=".7"/><path d="M11.5,1 L15,4.5 H11.5 Z" fill="#ffffff" opacity=".6"/><text x="1.3" y="10.5" font-family="Liberation Sans" font-weight="bold" font-size="7.5" fill="#0e4a66" letter-spacing="-0.4">1/2</text></svg>
<div class="rt" style="left:412px;top:392px">SpreadFactor</div>
<div class="rt" style="left:620px;top:392px">1.0</div>
<div class="abs" style="left:390px;top:409px;width:455px;height:19px;background:#e9e9e9"></div>
<div class="abs" style="left:390px;top:428px;width:455px;height:1px;background:#c8c8c8"></div>
<div class="abs" style="left:616px;top:409px;width:1px;height:19px;background:#dcdcdc"></div>
<svg width="16" height="16" style="left:392px;top:411px"><defs><linearGradient id="ig_bool411" x1="0" y1="0" x2="0" y2="1"><stop offset="0" stop-color="#b4f2b4"/><stop offset="1" stop-color="#6cd86c"/></linearGradient></defs><path d="M0.5,0.5 H11 L15.5,5 V14.2 L14.5,13.5 L13.5,15 L12,13.8 L10.5,15 L9,13.8 L7.5,15 L6,13.8 L4.5,15 L3,13.8 L1.5,15 L0.5,14.2 Z" fill="url(#ig_bool411)" stroke="#58a858" stroke-width="1"/><path d="M11,0.5 V5 H15.5" fill="none" stroke="#58a858" stroke-width="0.8" opacity=".7"/><path d="M11.5,1 L15,4.5 H11.5 Z" fill="#ffffff" opacity=".6"/><path d="M2.5,11.5 L7,7.5 M8.5,9.8 Q9.5,10.8 10.5,10.2 L13,10.2" stroke="#0a300a" stroke-width="1.7" fill="none"/></svg>
<div class="rt" style="left:412px;top:412px">AutoTimeShiftAdjust</div>
<div class="rt" style="left:620px;top:412px">true</div>
<div class="abs" style="left:390px;top:429px;width:455px;height:19px;background:#ffffff"></div>
<div class="abs" style="left:390px;top:448px;width:455px;height:1px;background:#c8c8c8"></div>
<div class="abs" style="left:616px;top:429px;width:1px;height:19px;background:#dcdcdc"></div>
<svg width="16" height="16" style="left:392px;top:431px"><defs><linearGradient id="ig_123431" x1="0" y1="0" x2="0" y2="1"><stop offset="0" stop-color="#cfe6fb"/><stop offset="1" stop-color="#8cc0ee"/></linearGradient></defs><path d="M0.5,0.5 H11 L15.5,5 V14.2 L14.5,13.5 L13.5,15 L12,13.8 L10.5,15 L9,13.8 L7.5,15 L6,13.8 L4.5,15 L3,13.8 L1.5,15 L0.5,14.2 Z" fill="url(#ig_123431)" stroke="#5a8cc0" stroke-width="1"/><path d="M11,0.5 V5 H15.5" fill="none" stroke="#5a8cc0" stroke-width="0.8" opacity=".7"/><path d="M11.5,1 L15,4.5 H11.5 Z" fill="#ffffff" opacity=".6"/><text x="1.2" y="10.8" font-family="Liberation Sans" font-weight="bold" font-size="6.8" fill="#0a2a60" letter-spacing="-0.3">123</text></svg>
<div class="rt" style="left:412px;top:432px">AdjustWeeklyTimeRemainBy_min</div>
<div class="rt" style="left:620px;top:432px">0</div>

<!-- buttons -->
<div class="btn" style="left:854px;top:449px;width:103px">Load</div>
<div class="btn" style="left:854px;top:482px;width:103px">Save</div>
<div class="btn" style="left:730px;top:521px;width:73px">OK</div>
<div class="btn" style="left:811px;top:521px;width:73px">Cancel</div>
<div class="btn" style="left:892px;top:521px;width:73px">Reset</div>
<svg width="10" height="10" style="left:965px;top:541px"><g fill="#c4c4c4"><rect x="7" y="1" width="1" height="1"/><rect x="5" y="3" width="1" height="1"/><rect x="7" y="3" width="1" height="1"/><rect x="3" y="5" width="1" height="1"/><rect x="5" y="5" width="1" height="1"/><rect x="7" y="5" width="1" height="1"/><rect x="1" y="7" width="1" height="1"/><rect x="3" y="7" width="1" height="1"/><rect x="5" y="7" width="1" height="1"/><rect x="7" y="7" width="1" height="1"/></g></svg>
</div>

<div id="sb">
<div class="st" style="left:2px">For Help, press F1</div>
<div class="ss" style="left:653px"></div><div class="st" style="left:659px">Default</div>
<div class="ss" style="left:769px"></div><div class="st" style="left:775px">2024.09.02 06:00</div>
<div class="ss" style="left:872px"></div><div class="st" style="left:877px">O: 1.31263</div>
<div class="ss" style="left:942px"></div><div class="st" style="left:948px">H: 1.31334</div>
<div class="ss" style="left:1013px"></div><div class="st" style="left:1019px">L: 1.31252</div>
<div class="ss" style="left:1082px"></div><div class="st" style="left:1087px">C: 1.31282</div>
<div class="ss" style="left:1152px"></div><div class="st" style="left:1157px">V: 664</div>
<div class="ss" style="left:1217px"></div><div class="st" style="left:1250px">59/3 kb</div>
</div>
<div id="sbicon" class="abs" style="left:0;top:0"><svg width="1365" height="685" style="left:0;top:0"><rect x="1223" y="670" width="2" height="13" fill="#5e8214"/><rect x="1223" y="680.0" width="2" height="3.0" fill="#143c6c"/><rect x="1226" y="670" width="2" height="13" fill="#5e8214"/><rect x="1226" y="678.9" width="2" height="4.1" fill="#143c6c"/><rect x="1229" y="670" width="2" height="13" fill="#5e8214"/><rect x="1229" y="677.8" width="2" height="5.2" fill="#143c6c"/><rect x="1232" y="670" width="2" height="13" fill="#5e8214"/><rect x="1232" y="676.7" width="2" height="6.3" fill="#143c6c"/><rect x="1235" y="670" width="2" height="13" fill="#5e8214"/><rect x="1235" y="675.6" width="2" height="7.4" fill="#143c6c"/><rect x="1238" y="670" width="2" height="13" fill="#5e8214"/><rect x="1238" y="674.5" width="2" height="8.5" fill="#143c6c"/><rect x="1241" y="670" width="2" height="13" fill="#5e8214"/><rect x="1241" y="673.4" width="2" height="9.6" fill="#143c6c"/><rect x="1244" y="670" width="2" height="13" fill="#5e8214"/><rect x="1244" y="672.3" width="2" height="10.7" fill="#143c6c"/></svg></div>
</body></html>
